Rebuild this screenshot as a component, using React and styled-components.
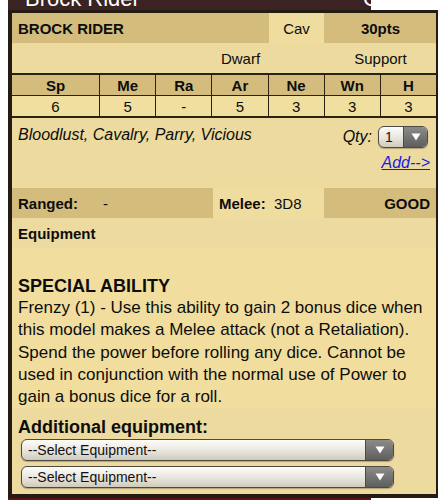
import React from 'react'
import styled, { createGlobalStyle } from 'styled-components'

const GlobalStyle = createGlobalStyle`
    body {
        margin: 0;
        background: #ffffff;
        font-family: 'Liberation Sans', Arial, sans-serif;
        color: #0d0d0d;
    }
`;

const Page = styled.div`
    width: 438px;
    height: 500px;
    overflow: hidden;
    padding-left: 8px;
    box-sizing: border-box;
`;

const TopBar = styled.div`
    width: 363px;
    height: 10px;
    background: #3a2322;
    display: flex;
    justify-content: space-between;
    overflow: hidden;
    color: #fff;
    font-size: 22px;
    line-height: 22px;
`;

const TopTitle = styled.span`
    margin-top: -12px;
    padding-left: 17px;
`;

const TopCut = styled.span`
    margin-top: -12px;
    width: 8px;
    overflow: hidden;
`;

const Card = styled.div`
    width: 430px;
    box-sizing: border-box;
    border: 3px solid #241c12;
    border-left-width: 4px;
    border-right-width: 2px;
    border-bottom-width: 4px;
    background: #ecda9f;
`;

const NameRow = styled.div`
    display: grid;
    grid-template-columns: 88px repeat(6, 1fr);
    column-gap: 1px;
    height: 30px;
    background: #d4bd7c;
    font-size: 15px;
`;

const Cell = styled.div`
    grid-column: ${p => p.span};
    display: flex;
    align-items: center;
    justify-content: ${p => (p.left ? 'flex-start' : p.right ? 'flex-end' : 'center')};
    padding-left: ${p => (p.left ? `${p.pad ?? 6}px` : '0')};
    padding-right: ${p => (p.right ? '6px' : '0')};
    font-weight: ${p => (p.bold ? 'bold' : 'normal')};
    background: ${p => p.bg || 'transparent'};
`;

const RaceRow = styled(NameRow)`
    background: #ecda9f;
`;

const StatTable = styled.div`
    display: grid;
    grid-template-columns: 87px repeat(6, 1fr);
    gap: 1px;
    background: #2b2214;
    border-top: 2px solid #2b2214;
    border-bottom: 2px solid #2b2214;
    font-size: 15px;
`;

const StatCell = styled.div`
    height: 20px;
    display: flex;
    align-items: center;
    justify-content: center;
    font-weight: ${p => (p.head ? 'bold' : 'normal')};
    background: ${p => (p.head ? '#d4bd7c' : '#f1df9f')};
`;

const RulesRow = styled.div`
    height: 70px;
    padding: 8px 8px 0 6px;
    box-sizing: border-box;
    display: flex;
    justify-content: space-between;
`;

const Rules = styled.div`
    font-style: italic;
    font-size: 16px;
    line-height: 18px;
`;

const QtyBox = styled.div`
    display: flex;
    flex-direction: column;
    align-items: flex-end;
    gap: 6px;
`;

const QtyLine = styled.div`
    display: flex;
    align-items: center;
    gap: 6px;
    font-style: italic;
    font-size: 16px;
`;

const AddLink = styled.a`
    color: #1a1ae6;
    font-style: italic;
    font-size: 16px;
    text-decoration: underline;
    margin-right: -2px;
`;

const AttackRow = styled(NameRow)``;

const EquipRow = styled.div`
    height: 30px;
    display: flex;
    align-items: center;
    padding-left: 6px;
    font-weight: bold;
    font-size: 15px;
    background: #ecdaa0;
`;

const Ability = styled.div`
    background: #f1de9e;
    padding: 27px 6px 0 6px;
    height: 160px;
    box-sizing: border-box;
`;

const AbilityTitle = styled.div`
    font-weight: bold;
    font-size: 18px;
    line-height: 22px;
`;

const AbilityText = styled.div`
    font-size: 17px;
    line-height: 22.3px;
    white-space: nowrap;
`;

const Extra = styled.div`
    padding: 8px 0 6px 9px;
    display: flex;
    flex-direction: column;
    gap: 5px;
`;

const ExtraTitle = styled.div`
    font-weight: bold;
    font-size: 18px;
    line-height: 22px;
    margin-left: -3px;
    margin-bottom: -4px;
`;

const Select = styled.div`
    width: ${p => p.width}px;
    height: 22px;
    box-sizing: border-box;
    display: flex;
    border: 1px solid #4d4a44;
    border-radius: 6px;
    overflow: hidden;
    background: linear-gradient(#fdfcf8, #e8e5dc 55%, #cfcabd);
    box-shadow: 0 1px 1px rgba(0, 0, 0, 0.25);
`;

const SelectText = styled.div`
    flex: 1;
    padding-left: 6px;
    font-size: ${p => p.size}px;
    line-height: 20px;
    font-style: normal;
    color: #111;
`;

const Arrow = styled.div`
    width: ${p => p.width}px;
    display: flex;
    align-items: center;
    justify-content: center;
    background: linear-gradient(#8b8b89, #5e5e5c);
    border-left: 1px solid #4a4a48;
`;

const BottomStrip = styled.div`
    width: 363px;
    height: 3px;
    background: #5b1413;
`;

const Triangle = () => (
    <svg width="10" height="8" viewBox="0 0 10 8">
        <path d="M0.5 0.5 H9.5 L5 7.5 Z" fill="#fff" />
    </svg>
);

const stats = [
    ['Sp', '6'], ['Me', '5'], ['Ra', '-'], ['Ar', '5'], ['Ne', '3'], ['Wn', '3'], ['H', '3'],
];

const abilityLines = [
    'Frenzy (1) - Use this ability to gain 2 bonus dice when',
    'this model makes a Melee attack (not a Retaliation).',
    'Spend the power before rolling any dice. Cannot be',
    'used in conjunction with the normal use of Power to',
    'gain a bonus dice for a roll.',
];

const App = () => {
    return (
        <Page>
            <GlobalStyle />
            <TopBar>
                <TopTitle>Brock Rider</TopTitle>
                <TopCut>C</TopCut>
            </TopBar>
            <Card>
                <NameRow>
                    <Cell span="1 / 5" left bold>BROCK RIDER</Cell>
                    <Cell span="5 / 6" bg="#efdc9f">Cav</Cell>
                    <Cell span="6 / 8" bold>30pts</Cell>
                </NameRow>
                <RaceRow>
                    <Cell span="3 / 6">Dwarf</Cell>
                    <Cell span="6 / 8">Support</Cell>
                </RaceRow>
                <StatTable>
                    {stats.map(([k]) => <StatCell key={k} head>{k}</StatCell>)}
                    {stats.map(([k, v]) => <StatCell key={k + 'v'}>{v}</StatCell>)}
                </StatTable>
                <RulesRow>
                    <Rules>Bloodlust, Cavalry, Parry, Vicious</Rules>
                    <QtyBox>
                        <QtyLine>
                            Qty:
                            <Select width={50}>
                                <SelectText size={14}>1</SelectText>
                                <Arrow width={23}><Triangle /></Arrow>
                            </Select>
                        </QtyLine>
                        <AddLink href="#">Add--&gt;</AddLink>
                    </QtyBox>
                </RulesRow>
                <AttackRow>
                    <Cell span="1 / 2" left bold>Ranged:</Cell>
                    <Cell span="2 / 4" left pad={2}>-</Cell>
                    <Cell span="4 / 6" left bg="#efdc9f"><b>Melee:</b>&nbsp;&nbsp;3D8</Cell>
                    <Cell span="6 / 8" right bold>GOOD</Cell>
                </AttackRow>
                <EquipRow>Equipment</EquipRow>
                <Ability>
                    <AbilityTitle>SPECIAL ABILITY</AbilityTitle>
                    <AbilityText>
                        {abilityLines.map((l, i) => <div key={i}>{l}</div>)}
                    </AbilityText>
                </Ability>
                <Extra>
                    <ExtraTitle>Additional equipment:</ExtraTitle>
                    {[0, 1].map(i => (
                        <Select key={i} width={373}>
                            <SelectText size={14}>--Select Equipment--</SelectText>
                            <Arrow width={27}><Triangle /></Arrow>
                        </Select>
                    ))}
                </Extra>
            </Card>
            <BottomStrip />
        </Page>
    )
}

export default App
